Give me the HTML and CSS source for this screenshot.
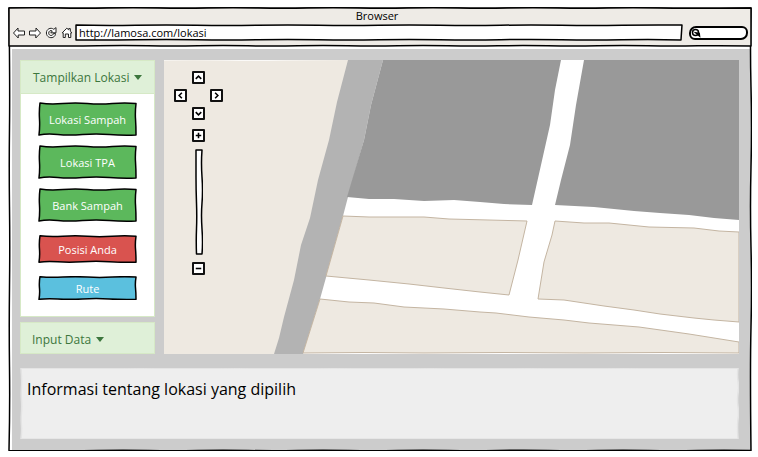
FILE: index.html
```html
<!DOCTYPE html>
<html lang="id">
<head>
<meta charset="utf-8">
<meta name="viewport" content="width=device-width, initial-scale=1">
<title>Browser</title>
<link rel="stylesheet" href="styles.css">
</head>
<body>
<svg class="defs" aria-hidden="true">
  <symbol id="box" viewBox="0 0 100 34" preserveAspectRatio="none">
    <path vector-effect="non-scaling-stroke" d="M2 1Q12 2.500 25 1.500T50 1.500T75 1.500T99 1.500Q98 10 98.500 17T99 33Q85 33.500 72 32.500T45 32.500T20 32.500T1 33Q2 25 1.500 17T2 1Z"/>
  </symbol>
  <symbol id="long" viewBox="0 0 600 16" preserveAspectRatio="none">
    <path vector-effect="non-scaling-stroke" d="M1 1Q30 1.800 60 1.200T120 1.200T180 1.200T240 1.200T300 1.200T360 1.200T420 1.200T480 1.200T540 1.200T599 1L598 15Q570 14.200 540 14.800T480 14.800T420 14.800T360 14.800T300 14.800T240 14.800T180 14.800T120 14.800T60 14.800T1 15Z"/>
  </symbol>
  <symbol id="bar" viewBox="0 0 744 40" preserveAspectRatio="none">
    <path vector-effect="non-scaling-stroke" d="M1 1Q25 .500 50 1T100 1T150 1T200 1T250 1T300 1T350 1T400 1T450 1T500 1T550 1T600 1T650 1T743 1L743 39Q715 38.400 690 38.800T640 38.800T590 38.800T540 38.800T490 38.800T440 38.800T390 38.800T340 38.800T290 38.800T240 38.800T190 38.800T140 38.800T90 38.800T1 39Z"/>
  </symbol>
  <symbol id="pane" viewBox="0 0 744 444" preserveAspectRatio="none">
    <path vector-effect="non-scaling-stroke" d="M1 1Q25 .500 50 1T100 1T150 1T200 1T250 1T300 1T350 1T400 1T450 1T500 1T550 1T600 1T650 1T743 1Q742 40 743 80T743 160T743 240T743 320T743 443.500Q715 443 690 443.500T640 443.500T590 443.500T540 443.500T490 443.500T440 443.500T390 443.500T340 443.500T290 443.500T240 443.500T190 443.500T140 443.500T90 443.500T1 443.500Q2 400 1.500 360T1.500 280T1.500 200T1.500 120T1 1Z"/>
  </symbol>
</svg>

<div class="window">
  <svg class="frame" aria-hidden="true"><use href="#pane"/></svg>
  <header class="chrome">
    <svg class="frame chrome-frame" aria-hidden="true"><use href="#bar"/></svg>
    <div class="title">Browser</div>
    <div class="toolbar">
      <nav class="nav">
        <button class="icon" type="button" aria-label="Kembali"><svg viewBox="0 0 14 14"><path d="M1.500 7 6 2V5H12.500V9H6.200V12Z"/></svg></button>
        <button class="icon" type="button" aria-label="Maju"><svg viewBox="0 0 14 14"><path d="M12.500 7 8 2V5H1.500V9H7.800V12Z"/></svg></button>
        <button class="icon" type="button" aria-label="Muat ulang"><svg viewBox="0 0 14 14"><path d="M9.800 3.300C6.500.800 2.300 3.300 2.400 7S6.200 12.600 9.200 11.200C10.800 10.400 11.500 9 11.500 7.600H9.400C9 10 5.200 10.500 4.700 7.300 4.500 4.900 6.800 3.900 8.300 5L6.800 6.800H12V1.600Z"/></svg></button>
        <button class="icon" type="button" aria-label="Beranda"><svg viewBox="0 0 14 14"><path d="M2.200 6.800 6.800 2.200 8.700 3.800V2.600H10.300V5.200L12 6.800H10.800V11.500H8.500V8H5.300V11.500H3.200V6.800Z"/></svg></button>
      </nav>
      <div class="field address">
        <svg class="frame paper" aria-hidden="true"><use href="#long"/></svg>
        <input type="text" aria-label="Alamat" value="http://lamosa.com/lokasi">
      </div>
      <div class="field search">
        <svg class="lens" viewBox="0 0 12 12" aria-hidden="true"><circle cx="4.500" cy="5.500" r="3"/><path d="M5 6 8.500 9 8.200 6.500Z"/></svg>
        <input type="search" aria-label="Cari">
      </div>
    </div>
  </header>

  <div class="page">
    <main class="columns">
      <aside class="sidebar">
        <section class="panel">
          <button class="heading" type="button">Tampilkan Lokasi <span class="caret"></span></button>
          <div class="choices">
            <button class="btn success" type="button"><svg class="frame" aria-hidden="true"><use href="#box"/></svg><span>Lokasi Sampah</span></button>
            <button class="btn success" type="button"><svg class="frame" aria-hidden="true"><use href="#box"/></svg><span>Lokasi TPA</span></button>
            <button class="btn success" type="button"><svg class="frame" aria-hidden="true"><use href="#box"/></svg><span>Bank Sampah</span></button>
            <button class="btn danger" type="button"><svg class="frame" aria-hidden="true"><use href="#box"/></svg><span>Posisi Anda</span></button>
            <button class="btn info" type="button"><svg class="frame" aria-hidden="true"><use href="#box"/></svg><span>Rute</span></button>
          </div>
        </section>
        <section class="panel collapsed">
          <button class="heading" type="button">Input Data <span class="caret"></span></button>
        </section>
      </aside>

      <section class="map" aria-label="Peta">
        <svg class="streets" viewBox="0 0 575 294" preserveAspectRatio="none" aria-hidden="true">
          <path class="land" d="M0 .500Q30 0 60 .500T120 .500L186 0 175 42 167 80 156 120 148 158 139 185 132 220 122 257 117 278 112 294H0Z"/>
          <path class="road" d="M184 0 173 42 165 80 154 120 146 158 137 185 130 220 120 257 115 278 110 294H139L156 239 163 214 179 156 184 137 200 80 207 45 219 0Z"/>
          <path class="building" d="M219 0H397L391 30 386 65 377 105 368 145 340 144 316 142 290 140 260 141 230 139 205 139 183 137 200 80 207 45Z"/>
          <path class="building" d="M420 0H575V160L550 158 525 155 496 153 470 151 430 147 391 145 397 120 406 85 412 45Z"/>
          <path class="block" d="M179 156 205 157 230 157 260 157 285 159 325 160 363 161 354 200 345 235 316 232 280 228 245 224 205 220 162 216Z"/>
          <path class="block" d="M391 161 420 163 445 163 485 167 530 168 555 171 575 172V262L550 260 530 258 496 254 470 250 440 246 400 240 374 239 380 202 388 175Z"/>
          <path class="block" d="M156 239 185 242 210 243 240 247 280 249 316 252 332 253 365 257 400 260 425 263 475 267 525 274 575 282V293L500 292.500 420 293 340 292.500 260 293 200 292.500 139 293Z"/>
        </svg>
        <div class="controls">
          <div class="pan">
            <button class="key up" type="button" aria-label="Atas"><svg viewBox="0 0 12 12"><path d="M3 7.500 6 4.500 9 7.500"/></svg></button>
            <button class="key left" type="button" aria-label="Kiri"><svg viewBox="0 0 12 12"><path d="M7.500 3 4.500 6 7.500 9"/></svg></button>
            <button class="key right" type="button" aria-label="Kanan"><svg viewBox="0 0 12 12"><path d="M4.500 3 7.500 6 4.500 9"/></svg></button>
            <button class="key down" type="button" aria-label="Bawah"><svg viewBox="0 0 12 12"><path d="M3 4.500 6 7.500 9 4.500"/></svg></button>
          </div>
          <button class="key" type="button" aria-label="Perbesar"><svg viewBox="0 0 12 12"><path d="M3 6H9M6 3V9"/></svg></button>
          <div class="zoom">
            <svg class="frame paper" viewBox="0 0 8 106" preserveAspectRatio="none" aria-hidden="true"><path d="M1 1H7Q6 14 7 28T7 54T7 80T7 105H1.500Q1 92 1.500 80T1.500 54T1 28Z"/></svg>
            <input type="range" aria-label="Zoom">
          </div>
          <button class="key" type="button" aria-label="Perkecil"><svg viewBox="0 0 12 12"><path d="M3 6H9"/></svg></button>
        </div>
      </section>
    </main>

    <section class="detail">
      <svg class="frame detail-frame" aria-hidden="true"><use href="#pane"/></svg>
      <p>Informasi tentang lokasi yang dipilih</p>
    </section>
  </div>
</div>
</body>
</html>
```
FILE: styles.css
```css
* {
  box-sizing: border-box;
}

body {
  margin: 0;
  padding: 7px 6px 6px 8px;
  background: #fff;
  color: #000;
  font-family: "Open Sans", "Noto Sans", sans-serif;
  font-size: 11px;
}

button,
input {
  margin: 0;
  padding: 0;
  border: 0;
  background: none;
  color: inherit;
  font: inherit;
}

.defs {
  position: absolute;
  width: 0;
  height: 0;
}

.frame {
  position: absolute;
  inset: 0;
  width: 100%;
  height: 100%;
  fill: none;
  stroke: #000;
  stroke-width: 1.5px;
  stroke-linejoin: round;
  pointer-events: none;
}

.paper {
  fill: #fff;
}

.window {
  position: relative;
  display: flex;
  flex-direction: column;
  min-height: calc(100vh - 13px);
}

/* Browser chrome */
.chrome {
  position: relative;
  height: 40px;
  padding: 1px 4px 0 4px;
}

.chrome-frame {
  fill: #eeebe6;
}

.title {
  position: relative;
  padding-right: 6px;
  line-height: 16px;
  text-align: center;
}

.toolbar {
  position: relative;
  display: flex;
  align-items: center;
  height: 17px;
}

.nav {
  display: flex;
  gap: 2px;
  margin-right: 1px;
}

.icon {
  width: 14px;
  height: 14px;
}

.icon svg {
  display: block;
  fill: #fff;
  stroke: #222;
  stroke-width: 1;
}

.field {
  position: relative;
  display: flex;
  align-items: center;
}

.field input {
  position: relative;
  flex: 1;
  min-width: 0;
  outline: 0;
}

.address {
  flex: 1;
  height: 17px;
  padding-left: 4px;
}

.search {
  width: 59px;
  height: 14px;
  margin-left: 6px;
  border: 2px solid #000;
  border-radius: 7px 6px 7px 6px;
  background: #fff;
}

.search input {
  height: 8px;
  appearance: none;
}

.lens {
  width: 12px;
  height: 12px;
  fill: none;
  stroke: #000;
  stroke-width: 1.5;
}

/* Page */
.page {
  display: flex;
  flex: 1;
  flex-direction: column;
  gap: 14px;
  margin: 2px 1px 0 4px;
  padding: 11px 12px 12px 8px;
  background: #ccc;
}

.columns {
  display: flex;
  flex: 1;
  gap: 9px;
}

.sidebar {
  display: flex;
  flex-direction: column;
  gap: 5px;
  width: 135px;
}

.panel {
  display: flex;
  flex: 1;
  flex-direction: column;
  border: 1px solid #d6e9c6;
  background: #fff;
}

.collapsed {
  flex: none;
}

.heading {
  display: flex;
  align-items: center;
  gap: 5px;
  height: 33px;
  padding-left: 12px;
  border-bottom: 1px solid #d6e9c6;
  background: #dff0d8;
  color: #3c763d;
  font-size: 12px;
}

.collapsed .heading {
  height: 30px;
  padding-top: 3px;
  padding-left: 11px;
  border: 0;
}

.caret {
  border: 4px solid transparent;
  border-top: 5px solid #3c763d;
  border-bottom: 0;
}

.choices {
  display: flex;
  flex-direction: column;
  padding: 8px 17px 16px;
}

.btn {
  position: relative;
  height: 28px;
  margin-top: 13px;
  color: #fff;
}

.btn span {
  position: relative;
}

.success {
  height: 34px;
  margin-top: 0;
}

.success + .success {
  margin-top: 9px;
}

.success .frame {
  fill: #5cb85c;
}

.danger .frame {
  fill: #d9534f;
}

.info {
  height: 24px;
}

.info .frame {
  fill: #5bc0de;
}

/* Map */
.map {
  position: relative;
  flex: 1;
  min-height: 294px;
  background: #fff;
}

.streets {
  position: absolute;
  width: 100%;
  height: 100%;
}

.land {
  fill: #eee9e1;
}

.road {
  fill: #b3b3b3;
}

.building {
  fill: #999;
}

.block {
  fill: #eee9e1;
  stroke: #c4b5a2;
  stroke-width: 1;
}

.controls {
  position: absolute;
  top: 11px;
  left: 10px;
  display: flex;
  flex-direction: column;
  align-items: center;
  gap: 7px;
}

.pan {
  display: grid;
  grid-template: repeat(3, 13px) / repeat(3, 13px);
  gap: 5px;
  margin-bottom: 2px;
}

.up {
  grid-area: 1 / 2;
}

.left {
  grid-area: 2 / 1;
}

.right {
  grid-area: 2 / 3;
}

.down {
  grid-area: 3 / 2;
}

.key {
  width: 13px;
  height: 13px;
  border: 2px solid #111;
  border-radius: 1px;
  background: #fff;
}

.key svg {
  display: block;
  margin: -1px;
  width: 11px;
  height: 11px;
  fill: none;
  stroke: #000;
  stroke-width: 1.7;
}

.zoom {
  position: relative;
  width: 8px;
  height: 106px;
}

.zoom input {
  position: relative;
  display: block;
  width: 8px;
  height: 100%;
  writing-mode: vertical-lr;
  appearance: none;
}

.zoom input::-webkit-slider-thumb {
  width: 0;
  height: 0;
  appearance: none;
}

/* Selected place */
.detail {
  position: relative;
  min-height: 71px;
  padding: 9px 7px;
}

.detail-frame {
  fill: #eee;
  stroke: #e4e4e4;
}

.detail p {
  position: relative;
  margin: 0;
  font-size: 16px;
  line-height: 24px;
}
```
